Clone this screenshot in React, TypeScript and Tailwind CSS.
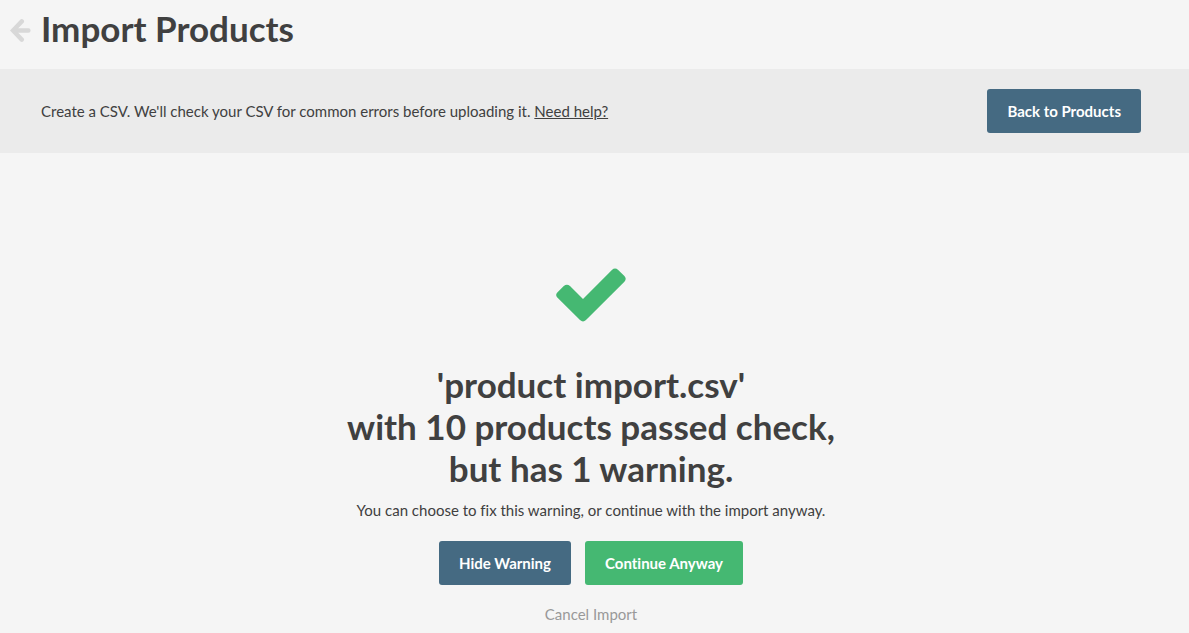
function BackArrow() {
  return (
    <svg viewBox="0 0 21 23" className="h-[23px] w-[21px]" fill="none" stroke="currentColor" strokeWidth="4.4" strokeLinecap="round" strokeLinejoin="miter" aria-hidden="true">
      <path d="M11.8 2.4 L3 11.5 L11.8 20.6 M4 11.5 H18.4" />
    </svg>
  );
}

function CheckMark() {
  return (
    <svg viewBox="0 0 70 54" className="h-[54px] w-[70px] text-[#45b872]" fill="currentColor" aria-hidden="true">
      <path d="M1.3 24.6 L7.8 18.1 Q10.9 15.4 14 18.1 L27 31 L55.9 2 Q59 -0.9 62.2 2 L68.4 7.9 Q71 10.8 68.4 13.7 L30 52 Q27 54.8 24 52 L1.3 29.6 Q-1 27.1 1.3 24.6 Z" />
    </svg>
  );
}

export default function App() {
  return (
    <div className="min-h-screen bg-[#f5f5f5] font-['Lato',sans-serif] text-[15px] leading-6 text-[#404040] [font-variant-ligatures:no-common-ligatures]">
      <header className="flex items-center gap-[10px] pt-[7px] pb-5 pl-[10px]">
        <a href="#products" aria-label="Back" className="mt-1 text-[#d8d8d8]">
          <BackArrow />
        </a>
        <h1 className="text-[35px] leading-[42px] font-bold">Import Products</h1>
      </header>
      <section className="flex items-center justify-between bg-[#ebebeb] py-5 pr-12 pl-[41px]">
        <p>
          Create a CSV. We'll check your CSV for common errors before uploading it.{" "}
          <a href="#help" className="underline">Need help?</a>
        </p>
        <button type="button" className="h-11 rounded-[3px] bg-[#456a82] px-5 font-bold text-white">
          Back to Products
        </button>
      </section>
      <main className="flex flex-col items-center pt-[115px] pr-[7px] text-center">
        <CheckMark />
        <h2 className="mt-[41px] text-[35px] leading-[42px] font-bold">
          'product import.csv'
          <br />
          with 10 products passed check,
          <br />
          but has 1 warning.
        </h2>
        <p className="mt-[9px]">You can choose to fix this warning, or continue with the import anyway.</p>
        <div className="mt-[19px] flex gap-[14px]">
          <button type="button" className="h-11 rounded-[3px] bg-[#456a82] px-5 font-bold text-white">
            Hide Warning
          </button>
          <button type="button" className="h-11 rounded-[3px] bg-[#45b872] px-5 font-bold text-white">
            Continue Anyway
          </button>
        </div>
        <button type="button" className="mt-[17px] text-[#999999]">Cancel Import</button>
      </main>
    </div>
  );
}
